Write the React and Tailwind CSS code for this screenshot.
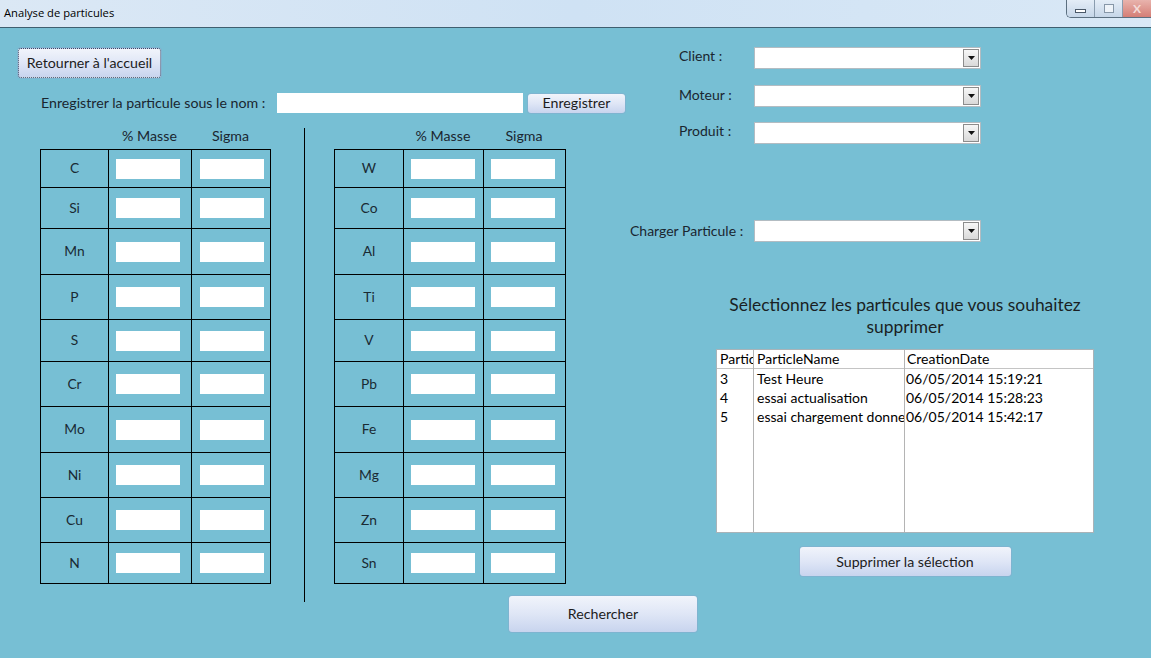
import React from 'react'

const FORM_FONT = { fontFamily: 'Lato, "Open Sans", sans-serif' }

const leftRows = ['C', 'Si', 'Mn', 'P', 'S', 'Cr', 'Mo', 'Ni', 'Cu', 'N']
const rightRows = ['W', 'Co', 'Al', 'Ti', 'V', 'Pb', 'Fe', 'Mg', 'Zn', 'Sn']
const rowHeights = ['h-[38px]', 'h-[41px]', 'h-[46px]', 'h-[45px]', 'h-[42px]', 'h-[45px]', 'h-[46px]', 'h-[45px]', 'h-[45px]', 'h-[41px]']

const particles = [
  { id: 3, name: 'Test Heure', date: '06/05/2014 15:19:21' },
  { id: 4, name: 'essai actualisation', date: '06/05/2014 15:28:23' },
  { id: 5, name: 'essai chargement donnees', date: '06/05/2014 15:42:17' },
]

function AccessButton({ className, children, dotted }) {
  return (
    <div
      className={`flex items-center justify-center rounded-[3px] bg-gradient-to-b from-[#f1f4fb] via-[#dfe6f6] to-[#c8d4ee] text-[14.2px] text-[#1c1c1c] shadow-[0_0_0_1px_rgba(140,160,200,0.35)] ${
        dotted ? 'border border-dotted border-[#3c4a66]' : ''
      } ${className}`}
    >
      {children}
    </div>
  )
}

function Combo() {
  return (
    <div className="flex h-[22px] w-[227px] border border-[#b3bcc2] bg-white">
      <div className="flex-1" />
      <div className="my-[1px] mr-[1px] flex w-[16px] items-center justify-center border border-[#8c8c8c] bg-gradient-to-b from-[#f7f7f7] to-[#d9d9d9]">
        <svg width="7" height="4" viewBox="0 0 7 4">
          <path d="M0 0h7L3.5 4z" fill="#111" />
        </svg>
      </div>
    </div>
  )
}

function ElementTable({ rows, widths, inputOffsets }) {
  return (
    <div>
      <div className="flex h-[21px] items-start text-[14.2px] leading-[15px] text-[#1a2630]">
        <div className={widths[0]} />
        <div className={`${widths[1]} text-center`}>% Masse</div>
        <div className={`${widths[2]} text-center`}>Sigma</div>
      </div>
      <div className="border-t border-l border-black">
        {rows.map((el, i) => (
          <div key={el} className={`flex ${rowHeights[i]} border-b border-black`}>
            <div className={`${widths[0]} flex items-center justify-center border-r border-black text-[13.8px] text-[#1a2a33]`}>
              {el}
            </div>
            <div className={`${widths[1]} flex items-center border-r border-black ${inputOffsets[0]}`}>
              <div className="h-[20px] w-[64px] bg-white" />
            </div>
            <div className={`${widths[2]} flex items-center border-r border-black ${inputOffsets[1]}`}>
              <div className="h-[20px] w-[64px] bg-white" />
            </div>
          </div>
        ))}
      </div>
    </div>
  )
}

function ComboRow({ label, labelClass, className }) {
  return (
    <div className={`flex h-[22px] items-center ${className}`}>
      <span className={`text-[14px] text-[#1a2630] ${labelClass}`}>{label}</span>
      <Combo />
    </div>
  )
}

export default function App() {
  return (
    <div className="min-h-screen w-[1151px] overflow-hidden bg-[#77bfd4]" style={FORM_FONT}>
      {/* title bar */}
      <div className="flex h-[28px] items-start justify-between border-b border-[#3f5f70] bg-gradient-to-r from-[#dbe8f5] via-[#cfe2f4] to-[#d9e8f6]">
        <span className="pl-[4px] pt-[5px] text-[11.2px] text-black" style={{ fontFamily: '"Open Sans", "Noto Sans", sans-serif' }}>
          Analyse de particules
        </span>
        <div className="flex h-[18px] overflow-hidden rounded-bl-[5px] border-b border-l border-[#5b6f80]">
          <div className="flex w-[28px] items-center justify-center border-r border-[#8a9cae] bg-gradient-to-b from-[#e4edf7] to-[#c6d6e8]">
            <div className="mt-[5px] h-[4px] w-[11px] border border-[#4a5868] bg-white" />
          </div>
          <div className="flex w-[28px] items-center justify-center border-r border-[#8a9cae] bg-gradient-to-b from-[#e4edf7] to-[#c6d6e8]">
            <div className="h-[9px] w-[10px] border border-[#8797a8] bg-[#eef3f9]" />
          </div>
          <div className="flex w-[28px] items-center justify-center bg-gradient-to-b from-[#e8b3ad] to-[#d47e76]">
            <span className="text-[12px] font-bold text-[#f4dcd9]">X</span>
          </div>
        </div>
      </div>

      <div className="flex">
        {/* left column */}
        <div className="w-[630px] shrink-0">
          <div className="flex pt-[20px] pl-[18px]">
            <AccessButton dotted className="h-[30px] w-[143px]">
              Retourner à l'accueil
            </AccessButton>
          </div>

          <div className="mt-[15px] flex h-[20px] items-center">
            <span className="ml-[41px] w-[236px] text-[14.2px] text-[#1a2630]">Enregistrer la particule sous le nom :</span>
            <div className="h-[20px] w-[246px] bg-white" />
            <AccessButton className="ml-[5px] h-[19px] w-[97px]">Enregistrer</AccessButton>
          </div>

          <div className="mt-[15px] flex">
            <div className="ml-[40px]">
              <ElementTable rows={leftRows} widths={['w-[68px]', 'w-[83px]', 'w-[79px]']} inputOffsets={['pl-[7px]', 'pl-[8px]']} />
            </div>
            <div className="ml-[33px] h-[474px] w-px bg-black" />
            <div className="ml-[29px]">
              <ElementTable rows={rightRows} widths={['w-[69px]', 'w-[80px]', 'w-[82px]']} inputOffsets={['pl-[7px]', 'pl-[7px]']} />
            </div>
          </div>
        </div>

        {/* right column */}
        <div className="flex-1">
          <ComboRow label="Client :" labelClass="ml-[49px] w-[75px] pb-[5px]" className="mt-[19px]" />
          <ComboRow label="Moteur :" labelClass="ml-[49px] w-[75px] pb-[4px]" className="mt-[16px]" />
          <ComboRow label="Produit :" labelClass="ml-[49px] w-[75px] pb-[5px]" className="mt-[15px]" />
          <ComboRow label="Charger Particule :" labelClass="w-[124px] pb-[2px]" className="mt-[76px]" />

          <div className="ml-[86px] mt-[52px] flex w-[378px] flex-col items-center">
            <p className="whitespace-nowrap text-center text-[17.4px] leading-[22px] text-[#1a1f24]">
              Sélectionnez les particules que vous souhaitez
              <br />
              supprimer
            </p>

            <div className="mt-[11px] h-[184px] w-full border border-[#a9b3b8] bg-white text-[14px] text-black">
              <div className="flex h-full">
                <div className="w-[37px] shrink-0 overflow-hidden whitespace-nowrap border-r border-[#b4b4b4]">
                  <div className="h-[19px] border-b border-[#c4c4c4] pl-[3px] leading-[18px]">Partic</div>
                  {particles.map((p) => (
                    <div key={p.id} className="h-[19px] pl-[3px] leading-[19px]">{p.id}</div>
                  ))}
                </div>
                <div className="w-[151px] shrink-0 overflow-hidden whitespace-nowrap border-r border-[#b4b4b4]">
                  <div className="h-[19px] border-b border-[#c4c4c4] pl-[3px] leading-[18px]">ParticleName</div>
                  {particles.map((p) => (
                    <div key={p.id} className="h-[19px] pl-[3px] leading-[19px]">{p.name}</div>
                  ))}
                </div>
                <div className="flex-1 overflow-hidden whitespace-nowrap">
                  <div className="h-[19px] border-b border-[#c4c4c4] pl-[2px] leading-[18px]">CreationDate</div>
                  {particles.map((p) => (
                    <div key={p.id} className="h-[19px] pl-[1px] leading-[19px]">{p.date}</div>
                  ))}
                </div>
              </div>
            </div>

            <AccessButton className="mt-[14px] h-[29px] w-[211px]">Supprimer la sélection</AccessButton>
          </div>
        </div>
      </div>

      <div className="-mt-[6px] flex pl-[509px]">
        <AccessButton className="h-[36px] w-[188px]">Rechercher</AccessButton>
      </div>
    </div>
  )
}
